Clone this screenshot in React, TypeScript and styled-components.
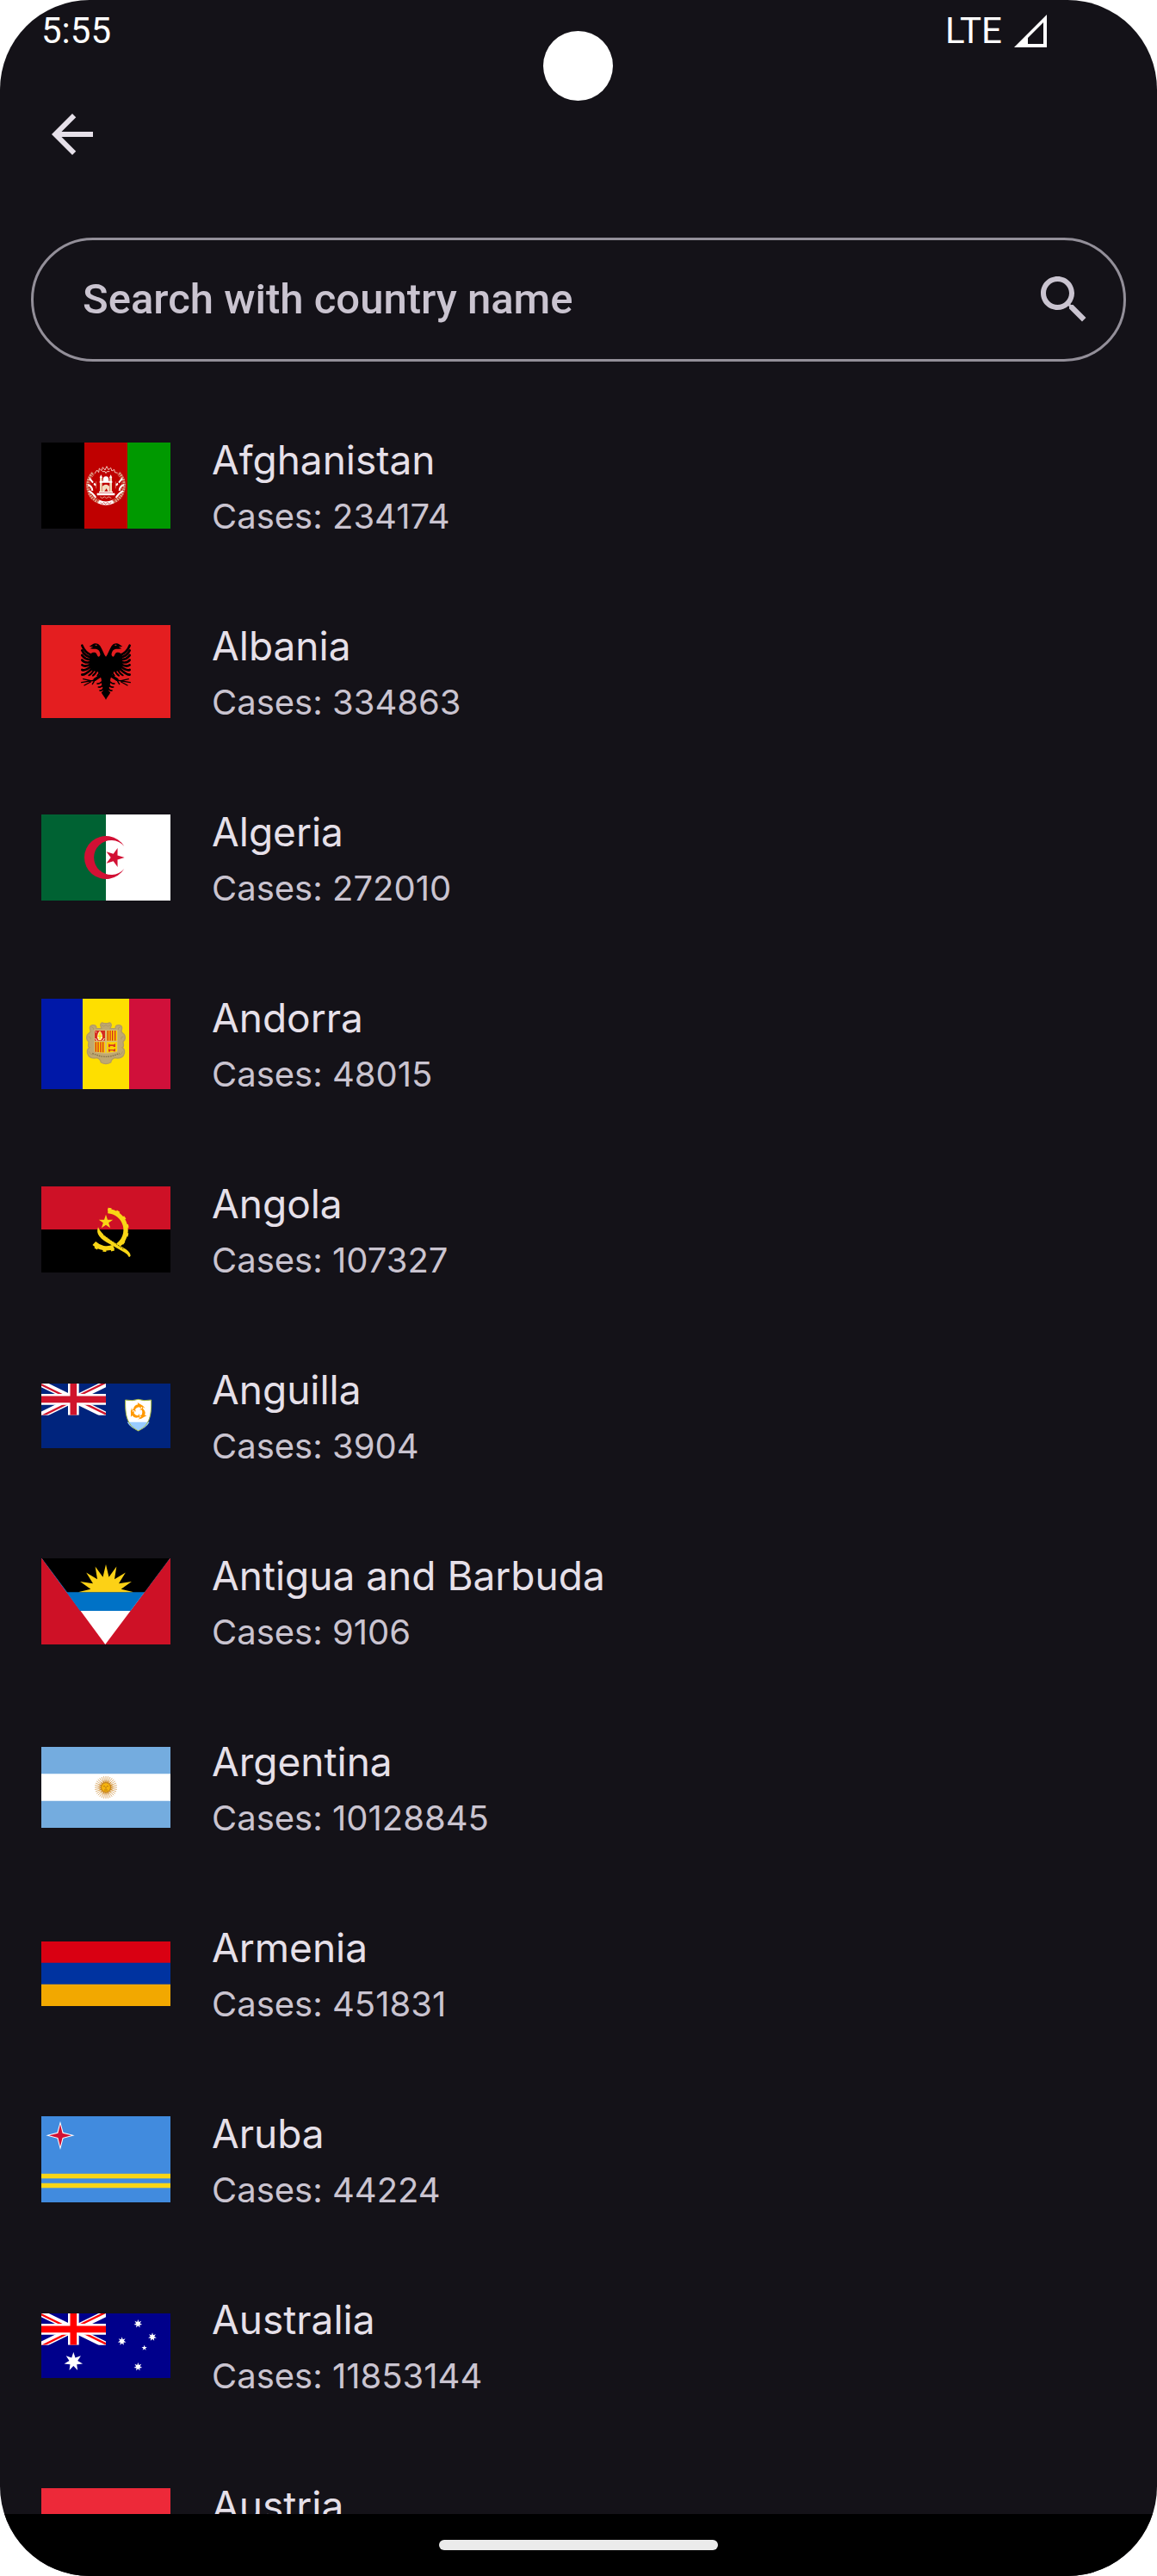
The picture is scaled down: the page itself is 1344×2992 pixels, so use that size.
import React, { useState } from "react";
import styled, { createGlobalStyle } from "styled-components";

const color = {
  surface: "#141218",
  text: "#e6e0e9",
  muted: "#cac4d0",
  outline: "#938f99",
};

const GlobalStyle = createGlobalStyle`
  *, *::before, *::after { box-sizing: border-box; }
  body { margin: 0; background: #ffffff; }
`;

const Screen = styled.div`
  position: relative;
  display: flex;
  flex-direction: column;
  height: 100vh;
  overflow: hidden;
  border-radius: 104px;
  background: ${color.surface};
  color: ${color.text};
  font-family: Inter, "Noto Sans", sans-serif;
`;

const StatusBar = styled.div`
  display: flex;
  justify-content: space-between;
  align-items: center;
  height: 72px;
  padding: 0 128px 0 48px;
  color: #ffffff;
  font: 400 42px/72px Roboto, sans-serif;
`;

const StatusGroup = styled.div`
  display: flex;
  align-items: center;
  gap: 14px;
`;

const Camera = styled.div`
  position: absolute;
  top: 36px;
  left: 50%;
  width: 81px;
  height: 81px;
  margin-left: -41px;
  border-radius: 50%;
  background: #ffffff;
`;

const AppBar = styled.header`
  display: flex;
  align-items: center;
  height: 168px;
  padding: 0 24px;
`;

const IconButton = styled.button`
  display: grid;
  place-items: center;
  width: 120px;
  height: 120px;
  padding: 0;
  border: 0;
  border-radius: 50%;
  background: none;
  color: inherit;
`;

const Icon = styled.svg`
  display: block;
  flex: none;
  width: 72px;
  height: 72px;
  fill: currentColor;
`;

const SearchBox = styled.label`
  display: flex;
  align-items: center;
  gap: 24px;
  height: 144px;
  margin: 36px;
  padding: 0 33px 0 57px;
  border: 3px solid ${color.outline};
  border-radius: 72px;
  color: ${color.muted};
`;

const SearchInput = styled.input`
  flex: 1;
  min-width: 0;
  padding: 0;
  border: 0;
  outline: 0;
  background: none;
  color: ${color.text};
  font: 500 49px/72px Roboto, sans-serif;

  &::placeholder {
    color: ${color.muted};
    opacity: 1;
  }
`;

const List = styled.ul`
  flex: 1;
  min-height: 0;
  margin: 0;
  padding: 0;
  overflow: hidden;
  list-style: none;
`;

const Row = styled.li`
  display: flex;
  align-items: center;
  gap: 48px;
  height: 216px;
  padding: 0 48px;
`;

const Details = styled.div`
  display: flex;
  flex-direction: column;
  min-height: 132px;
`;

const Name = styled.span`
  font-size: 46px;
  line-height: 72px;
`;

const Cases = styled.span`
  color: ${color.muted};
  font-size: 40px;
  line-height: 60px;
`;

const FlagSvg = styled.svg`
  display: block;
  flex: none;
  width: 150px;
  height: auto;
`;

const NavigationBar = styled.div`
  display: grid;
  place-items: center;
  height: 72px;
  background: #000000;
`;

const HomeHandle = styled.div`
  width: 324px;
  height: 12px;
  border-radius: 6px;
  background: #ebebeb;
`;

/* ---- drawing helpers ---- */

const polar = (cx: number, cy: number, r: number, deg: number) => {
  const a = (deg * Math.PI) / 180;
  return `${(cx + r * Math.cos(a)).toFixed(1)},${(cy + r * Math.sin(a)).toFixed(1)}`;
};

const starPoints = (cx: number, cy: number, n: number, outer: number, inner: number, start = -90) =>
  Array.from({ length: n * 2 }, (_, i) =>
    polar(cx, cy, i % 2 ? inner : outer, start + (i * 180) / n)
  ).join(" ");

const range = (n: number) => Array.from({ length: n }, (_, i) => i);

type FlagProps = { height: number; children: React.ReactNode };

const Flag = ({ height, children }: FlagProps) => (
  <FlagSvg viewBox={`0 0 450 ${height}`} aria-hidden="true">
    {children}
  </FlagSvg>
);

const UnionJack = ({ id, blue, red }: { id: string; blue: string; red: string }) => (
  <g>
    <clipPath id={`${id}-canton`}>
      <path d="M0 0H225V110H0Z" />
    </clipPath>
    <clipPath id={`${id}-saltire`}>
      <path d="M112 55H225V110ZM112 55V110H0ZM112 55H0V0ZM112 55V0H225Z" />
    </clipPath>
    <g clipPath={`url(#${id}-canton)`}>
      <path d="M0 0H225V110H0Z" fill={blue} />
      <path d="M0 0L225 110M225 0L0 110" stroke="#fff" strokeWidth="23" />
      <g clipPath={`url(#${id}-saltire)`}>
        <path d="M0 0L225 110M225 0L0 110" stroke={red} strokeWidth="14" />
      </g>
      <path d="M112 0V110M0 55H225" stroke="#fff" strokeWidth="38" />
      <path d="M112 0V110M0 55H225" stroke={red} strokeWidth="23" />
    </g>
  </g>
);

/* ---- flags ---- */

const Afghanistan = () => (
  <Flag height={300}>
    <path d="M0 0H150V300H0Z" fill="#000" />
    <path d="M150 0H300V300H150Z" fill="#bf0000" />
    <path d="M300 0H450V300H300Z" fill="#090" />
    <g fill="none">
      <path d="M181 106A62 62 0 0 0 204 208M269 106A62 62 0 0 1 246 208" stroke="#dc9e84" strokeWidth="13" />
      <path d="M181 106A62 62 0 0 0 204 208M269 106A62 62 0 0 1 246 208" stroke="#bf0000" strokeWidth="13" strokeDasharray="2 6" />
      <path d="M184 108A58 58 0 0 0 204 204M266 108A58 58 0 0 1 246 204" stroke="#bf0000" strokeWidth="2" />
      <path d="M168 125L180 140M162 148Q176 150 178 168M165 168Q182 178 190 192M282 125L270 140M288 148Q274 150 272 168M285 168Q268 178 260 192" stroke="#fff" strokeWidth="6" />
      <path d="M200 206Q225 218 250 206" stroke="#fff" strokeWidth="13" />
      <path d="M206 209L212 214L218 209L224 215L230 209L237 214L244 208" stroke="#bf0000" strokeWidth="2" />
      <path d="M186 108L194 96L200 104L202 90L210 98L214 86L222 96L228 83L234 95L242 88L246 99L254 94L256 104L266 106" stroke="#f0c9bd" strokeWidth="3" />
      <path d="M212 101H222L225 107L229 101H238" stroke="#f0c9bd" strokeWidth="3" />
      <path d="M205 189L212 194L220 189L227 194L235 189L244 194" stroke="#e9a795" strokeWidth="3" />
      <path d="M191 136V160M259 136V160" stroke="#dc9e84" strokeWidth="2" />
    </g>
    <g fill="#fff">
      <path d="M194 176H256V184H194ZM201 170H249V175H201Z" />
      <path d="M204 120H212V172H204ZM238 120H246V172H238Z" fill="#f0d9b8" />
      <path d="M208 112L213 122H203ZM242 112L247 122H237Z" />
      <path d="M215 130A10 12 0 1 1 235 130V134H215ZM203 134H247V140H203Z" />
      <path d="M213 170V152Q225 140 237 152V170H232L227 160L219 172Z" fill="#f3dcc0" />
      <path d="M184 140L190 144V152L182 147ZM266 140L260 144V152L268 147Z" />
    </g>
  </Flag>
);

const EagleHalf = () => (
  <g>
    <path d="M226 112C219 104 214 88 206 74C200 64 186 61 179 67L167 75L181 76L170 82C182 85 191 80 199 87C208 98 207 110 199 110C193 107 195 96 185 95C177 94 169 100 168 108V148C174 158 184 162 197 163C206 174 211 188 210 204L216 226L212 240L226 260Z" />
    <g fill="none" stroke="#000" strokeLinecap="round" strokeWidth="8">
      {range(7).map((i) => (
        <path
          key={i}
          d={`M${174 + (i > 5 ? 3 : 0)} ${104 + i * 8}Q${152} ${96 + i * 13} ${142} ${71 + i * 17}`}
        />
      ))}
      <path d="M184 152Q178 170 166 175M194 156Q190 170 180 176M204 158Q203 170 196 176" strokeWidth="6" />
      <path d="M208 176L186 190" strokeWidth="10" />
      <path d="M188 192L140 200M172 194L146 188M172 198L150 210M184 196L178 206" strokeWidth="4" />
      <path d="M218 190Q206 206 195 204M218 204Q210 218 199 216M220 216Q212 230 204 228M222 228L212 236" strokeWidth="5" />
    </g>
  </g>
);

const Albania = () => (
  <Flag height={324}>
    <path d="M0 0H450V324H0Z" fill="#e41e20" />
    <EagleHalf />
    <g transform="matrix(-1 0 0 1 450 0)">
      <EagleHalf />
    </g>
    <path d="M188 70H194M256 70H262" stroke="#e41e20" strokeWidth="3" />
  </Flag>
);

const Algeria = () => (
  <Flag height={300}>
    <path d="M0 0H225V300H0Z" fill="#006233" />
    <path d="M225 0H450V300H225Z" fill="#fff" />
    <path d="M289 111A75 75 0 1 0 289 189A60 60 0 1 1 289 111Z" fill="#d21034" />
    <polygon points={starPoints(255, 150, 5, 35, 13, 0)} fill="#d21034" />
  </Flag>
);

const Andorra = () => (
  <Flag height={315}>
    <path d="M0 0H144V315H0Z" fill="#0018a8" />
    <path d="M144 0H306V315H144Z" fill="#fedf00" />
    <path d="M306 0H450V315H306Z" fill="#d0103a" />
    <g fill="#bfa872" stroke="#b39c62" strokeWidth="4">
      <path d="M206 92Q208 80 218 86H232Q242 80 244 92L240 104H258Q258 90 272 92Q284 94 280 108Q276 116 284 120Q296 128 290 144Q282 150 286 158Q288 168 282 170Q296 180 286 198Q276 210 256 206Q244 210 242 222Q225 232 208 222Q206 210 194 206Q174 210 164 198Q154 180 168 170Q162 168 164 158Q168 150 160 144Q154 128 166 120Q174 116 170 108Q166 94 178 92Q192 90 192 104H210Z" />
    </g>
    <g fill="none" stroke="#a4915b" strokeWidth="2">
      <path d="M210 92Q218 100 225 92Q232 100 240 92M174 98Q184 100 182 108M276 98Q266 100 268 108M164 132Q174 132 172 142M286 132Q276 132 278 142M166 184Q170 196 182 196M284 184Q280 196 268 196" />
      <path d="M178 190Q225 214 272 190" stroke="#83714a" strokeWidth="4" strokeDasharray="5 3" />
    </g>
    <path d="M184 109H266V184Q262 190 225 191Q188 190 184 184Z" fill="#d8bd72" />
    <path d="M186 111H222V146H186Z" fill="#d52b1e" />
    <path d="M204 112Q214 122 213 136L208 144H199L195 136Q195 120 204 112Z" fill="#fff2a0" />
    <path d="M204 118V140M197 130H212" stroke="#fedf00" strokeWidth="4" />
    <path d="M188 138L194 146M220 138L214 146M188 114L192 118" stroke="#fff" strokeWidth="3" />
    <path d="M228 111H264V146H228ZM186 151H222V188L186 184ZM228 151H264V184L228 188Z" fill="#fbd100" />
    <path d="M232 111V146M240 111V146M248 111V146M257 111V146M190 151V185M198 151V186M207 151V187M215 151V187" stroke="#d52b1e" strokeWidth="4" />
    <path d="M234 157L240 160H252L258 156V168H252L250 165H240L238 170L234 168ZM234 174L240 177H252L258 173V184H252L250 181H240L238 186L234 184Z" fill="#d9391e" />
  </Flag>
);

const Angola = () => (
  <Flag height={300}>
    <path d="M0 0H450V150H0Z" fill="#ce1126" />
    <path d="M0 150H450V300H0Z" fill="#000" />
    <g fill="none" stroke="#f9d616">
      <path d="M232 86A66 66 0 0 1 266 206M184 198A64 64 0 0 0 252 211" strokeWidth="16" />
      {[-82, -58, -34, -10, 14, 38, 74, 96, 120].map((deg) => (
        <path key={deg} d={`M${polar(228, 151, 66, deg)}L${polar(228, 151, 77, deg)}`} strokeWidth="12" />
      ))}
    </g>
    <path d="M198 142C206 160 222 174 244 188L296 220Q310 230 311 242L306 247Q302 236 290 230L240 202C206 184 188 166 198 142Z" fill="#f9d616" />
    <path d="M216 168L286 218" stroke="#000" strokeWidth="2" strokeDasharray="6 3" />
    <polygon points={starPoints(225, 124, 5, 26, 10)} fill="#f9d616" />
  </Flag>
);

const Anguilla = () => (
  <Flag height={225}>
    <path d="M0 0H450V225H0Z" fill="#00247d" />
    <UnionJack id="anguilla" blue="#00247d" red="#cf142b" />
    <path d="M293 57Q318 62 338 55Q358 62 383 57C384 106 380 144 338 165C296 144 292 106 293 57Z" fill="#fff" />
    <path d="M299 134H377Q366 154 338 164Q310 154 299 134Z" fill="#9cf" />
    <path d="M293 57Q318 62 338 55Q358 62 383 57C384 106 380 144 338 165C296 144 292 106 293 57Z" fill="none" stroke="#a5b83c" strokeWidth="3" />
    <g fill="#f90">
      {[0, 120, 240].map((deg) => (
        <path
          key={deg}
          transform={`rotate(${deg} 338 98)`}
          d="M321 88Q324 74 337 73L335 66L345 72Q354 75 362 86Q354 81 347 81L348 88L341 82Q332 83 327 90L330 98L322 93L314 96Z"
        />
      ))}
    </g>
  </Flag>
);

const Antigua = () => (
  <Flag height={300}>
    <path d="M0 0H450V300H0Z" fill="#ce1126" />
    <path d="M2 0H448L223 300Z" fill="#fff" />
    <path d="M2 0H448L311 183H135Z" fill="#0072c6" />
    <path d="M2 0H448L360 118H90Z" fill="#000" />
    <clipPath id="antigua-horizon">
      <path d="M0 0H450V118H0Z" />
    </clipPath>
    <polygon points={starPoints(225, 118, 16, 97, 54)} fill="#fcd116" clipPath="url(#antigua-horizon)" />
  </Flag>
);

const Argentina = () => (
  <Flag height={282}>
    <path d="M0 0H450V282H0Z" fill="#74acdf" />
    <path d="M0 94H450V188H0Z" fill="#fff" />
    <g stroke="#cf8f3a" strokeWidth="2">
      {range(32).map((i) => (
        <path key={i} d={`M${polar(225, 141, 15, i * 11.25)}L${polar(225, 141, 39, i * 11.25)}`} />
      ))}
    </g>
    <polygon points={starPoints(225, 141, 16, 28, 16)} fill="#cf8a22" />
    <circle cx="225" cy="141" r="16" fill="#f6b40e" stroke="#b87a17" strokeWidth="2" />
    <path d="M216 137H222M228 137H234M225 138V146M219 150H231" stroke="#9a5a10" strokeWidth="2" />
  </Flag>
);

const Armenia = () => (
  <Flag height={225}>
    <path d="M0 0H450V75H0Z" fill="#d90012" />
    <path d="M0 74H450V150H0Z" fill="#0033a0" />
    <path d="M0 149H450V225H0Z" fill="#f2a800" />
  </Flag>
);

const Aruba = () => (
  <Flag height={300}>
    <path d="M0 0H450V300H0Z" fill="#418bde" />
    <path d="M0 200H450V217H0ZM0 233H450V250H0Z" fill="#f9d616" />
    <polygon points={starPoints(66, 67, 4, 50, 15)} fill="#fff" />
    <polygon points={starPoints(66, 67, 4, 39, 11)} fill="#d21034" />
  </Flag>
);

const Australia = () => (
  <Flag height={225}>
    <path d="M0 0H450V225H0Z" fill="#00008b" />
    <UnionJack id="australia" blue="#00008b" red="#f00" />
    <g fill="#fff">
      <polygon points={starPoints(112, 168, 7, 33, 15)} />
      <polygon points={starPoints(337, 36, 7, 15, 7)} />
      <polygon points={starPoints(387, 82, 7, 15, 7)} />
      <polygon points={starPoints(281, 97, 7, 15, 7)} />
      <polygon points={starPoints(359, 120, 5, 10, 4)} />
      <polygon points={starPoints(337, 186, 7, 15, 7)} />
    </g>
  </Flag>
);

const Austria = () => (
  <Flag height={300}>
    <path d="M0 0H450V300H0Z" fill="#ed2939" />
    <path d="M0 100H450V200H0Z" fill="#fff" />
  </Flag>
);

type Country = { name: string; cases?: number; Flag: () => React.ReactElement };

const countries: Country[] = [
  { name: "Afghanistan", cases: 234174, Flag: Afghanistan },
  { name: "Albania", cases: 334863, Flag: Albania },
  { name: "Algeria", cases: 272010, Flag: Algeria },
  { name: "Andorra", cases: 48015, Flag: Andorra },
  { name: "Angola", cases: 107327, Flag: Angola },
  { name: "Anguilla", cases: 3904, Flag: Anguilla },
  { name: "Antigua and Barbuda", cases: 9106, Flag: Antigua },
  { name: "Argentina", cases: 10128845, Flag: Argentina },
  { name: "Armenia", cases: 451831, Flag: Armenia },
  { name: "Aruba", cases: 44224, Flag: Aruba },
  { name: "Australia", cases: 11853144, Flag: Australia },
  { name: "Austria", Flag: Austria },
];

export default function App() {
  const [query, setQuery] = useState("");
  const shown = countries.filter((c) => c.name.toLowerCase().includes(query.trim().toLowerCase()));

  return (
    <>
      <GlobalStyle />
      <Screen>
        <StatusBar>
          <span>5:55</span>
          <StatusGroup>
            <span>LTE</span>
            <svg width="38" height="38" viewBox="0 0 38 38" aria-hidden="true">
              <path d="M38 0V38H0ZM34 9L16 27V34H34Z" fill="#fff" fillRule="evenodd" />
            </svg>
          </StatusGroup>
        </StatusBar>
        <Camera />
        <AppBar>
          <IconButton type="button" aria-label="Back">
            <Icon viewBox="0 0 24 24" aria-hidden="true">
              <path d="M20 11H7.83l5.59-5.59L12 4l-8 8 8 8 1.41-1.41L7.83 13H20v-2z" />
            </Icon>
          </IconButton>
        </AppBar>
        <SearchBox>
          <SearchInput
            type="text"
            aria-label="Search with country name"
            placeholder="Search with country name"
            value={query}
            onChange={(e) => setQuery(e.target.value)}
          />
          <Icon viewBox="0 0 24 24" aria-hidden="true">
            <path d="M15.5 14h-.79l-.28-.27C15.41 12.59 16 11.11 16 9.5 16 5.91 13.09 3 9.5 3S3 5.91 3 9.5 5.91 16 9.5 16c1.61 0 3.09-.59 4.23-1.57l.27.28v.79l5 4.99L20.49 19l-4.99-5zm-6 0C7.01 14 5 11.99 5 9.5S7.01 5 9.5 5 14 7.01 14 9.5 11.99 14 9.5 14z" />
          </Icon>
        </SearchBox>
        <List>
          {shown.map(({ name, cases, Flag: CountryFlag }) => (
            <Row key={name}>
              <CountryFlag />
              <Details>
                <Name>{name}</Name>
                {cases !== undefined && <Cases>Cases: {cases}</Cases>}
              </Details>
            </Row>
          ))}
        </List>
        <NavigationBar>
          <HomeHandle />
        </NavigationBar>
      </Screen>
    </>
  );
}
